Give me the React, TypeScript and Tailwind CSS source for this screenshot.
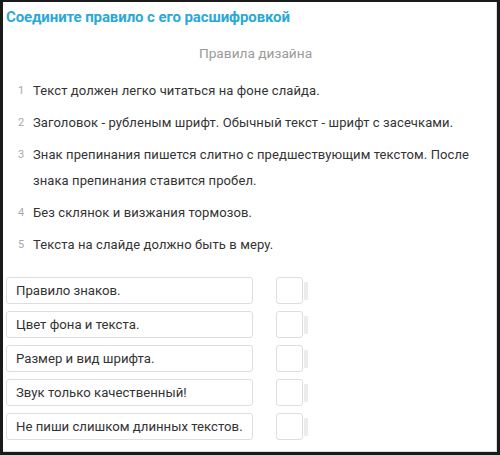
import React from "react";

const rules = [
  "Текст должен легко читаться на фоне слайда.",
  "Заголовок - рубленым шрифт. Обычный текст - шрифт с засечками.",
  "Знак препинания пишется слитно с предшествующим текстом. После знака препинания ставится пробел.",
  "Без склянок и визжания тормозов.",
  "Текста на слайде должно быть в меру.",
];

const answers = [
  "Правило знаков.",
  "Цвет фона и текста.",
  "Размер и вид шрифта.",
  "Звук только качественный!",
  "Не пиши слишком длинных текстов.",
];

export default function App() {
  return (
    <div
      className="w-[500px] h-[455px] bg-[#1a1a1a] pl-[3px] pr-[3px] pt-[2px] pb-[3px]"
      style={{ fontFamily: "Roboto, 'Noto Sans', sans-serif" }}
    >
      <div className="w-full h-full bg-white border-r border-b border-[#dcdcdc] flex flex-col">
        <div className="pl-[3px] pt-[6px] text-[15px] font-bold text-[#2ba8d6] leading-[18px] tracking-[-0.1px]">
          Соедините правило с его расшифровкой
        </div>
        <div className="mt-[19px] text-center pl-[12px] text-[13.7px] text-[#9a9a9a] leading-[16px]">
          Правила дизайна
        </div>
        <ol className="mt-[17px] flex flex-col gap-[6px] pr-[20px]">
          {rules.map((r, i) => (
            <li key={i} className="flex text-[13px] leading-[26px] text-[#333] tracking-[0.1px]">
              <span className="w-[30px] shrink-0 pl-[15px] text-[11px] text-[#a8a8a8]">{i + 1}</span>
              <span>{r}</span>
            </li>
          ))}
        </ol>
        <div className="mt-[19px] flex flex-col gap-[7px] pl-[3px]">
          {answers.map((a, i) => (
            <div key={i} className="flex items-center">
              <div className="w-[247px] h-[27px] border border-[#dedede] rounded-[3px] flex items-center pl-[9px] text-[13.2px] text-[#333]">
                {a}
              </div>
              <div className="ml-[23px] w-[27px] h-[27px] border border-[#dedede] rounded-[3px]" />
              <div className="ml-[1px] w-[4px] h-[18px] bg-[#ececec] rounded-[1px]" />
            </div>
          ))}
        </div>
      </div>
    </div>
  );
}
